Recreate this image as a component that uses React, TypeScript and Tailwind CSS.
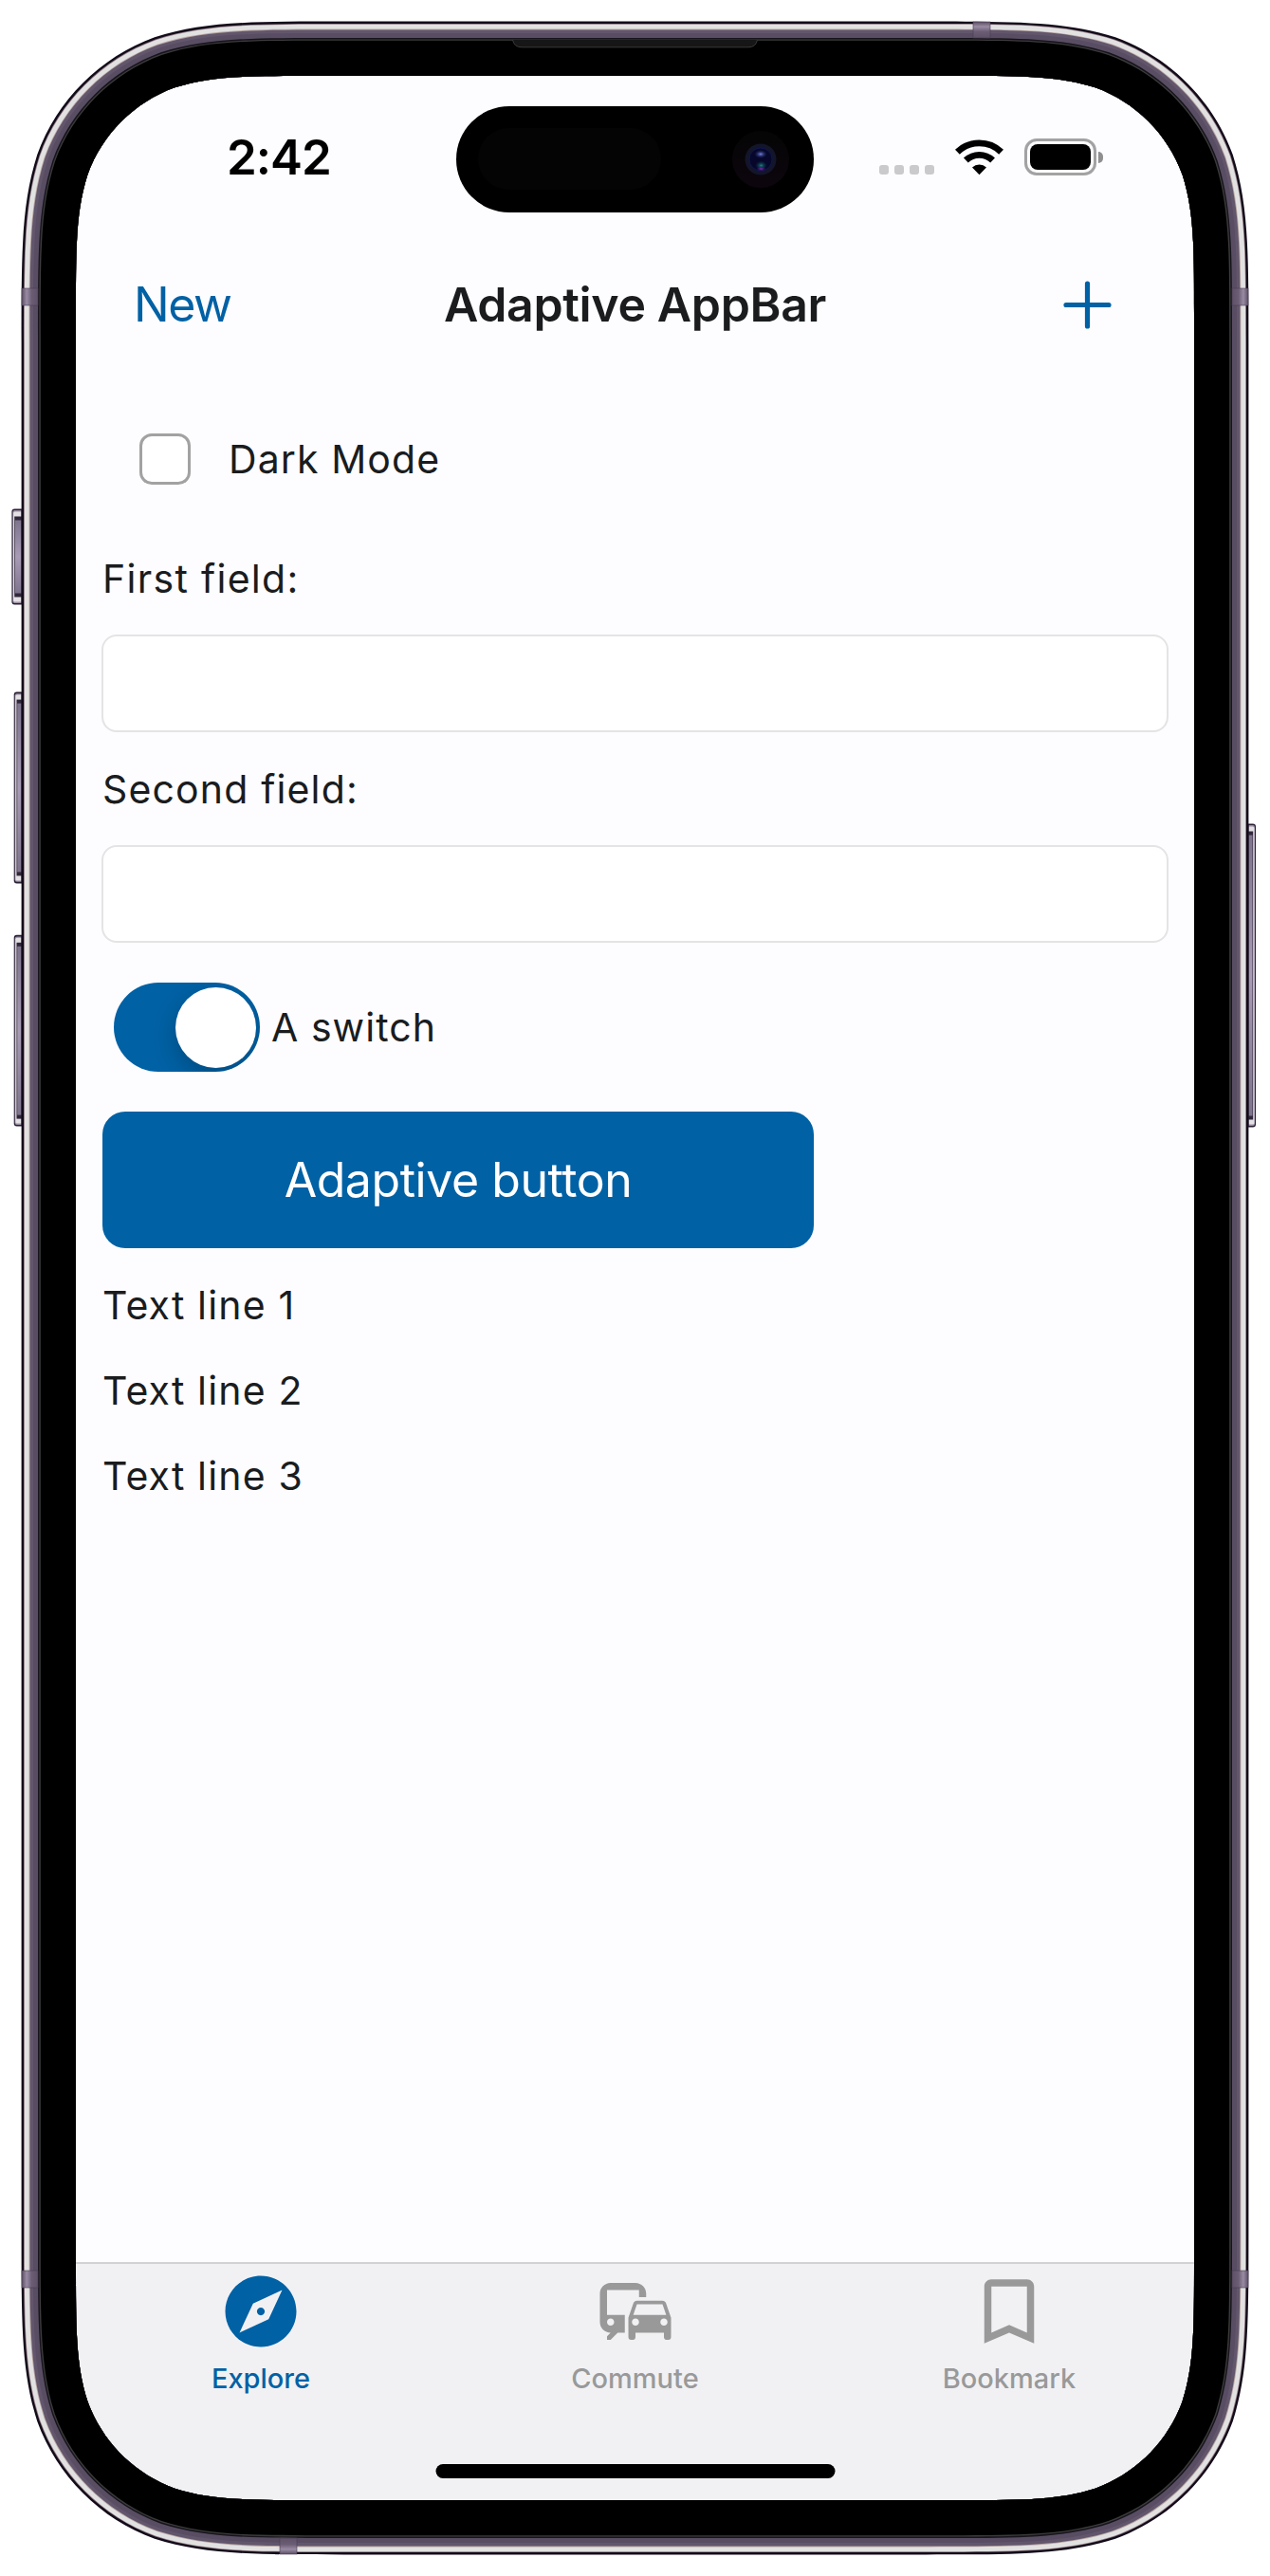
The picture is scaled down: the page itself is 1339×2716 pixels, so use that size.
import React, { useState } from "react";
import { MdBookmarkBorder, MdCommute, MdExplore } from "react-icons/md";

/** Path of a rectangle with continuous (squircle) corners. */
function squircle(x: number, y: number, w: number, h: number, r: number) {
  const a = 1.528665 * r;
  const b = 1.08849296 * r;
  const c = 0.86840694 * r;
  const d = 0.63149379 * r;
  const e = 0.07491139 * r;
  const f = 0.37282383 * r;
  const g = 0.16905956 * r;
  const R = x + w;
  const B = y + h;
  return [
    `M${x + a} ${y}H${R - a}`,
    `C${R - b} ${y} ${R - c} ${y} ${R - d} ${y + e}`,
    `C${R - f} ${y + g} ${R - g} ${y + f} ${R - e} ${y + d}`,
    `C${R} ${y + c} ${R} ${y + b} ${R} ${y + a}`,
    `V${B - a}`,
    `C${R} ${B - b} ${R} ${B - c} ${R - e} ${B - d}`,
    `C${R - g} ${B - f} ${R - f} ${B - g} ${R - d} ${B - e}`,
    `C${R - c} ${B} ${R - b} ${B} ${R - a} ${B}`,
    `H${x + a}`,
    `C${x + b} ${B} ${x + c} ${B} ${x + d} ${B - e}`,
    `C${x + f} ${B - g} ${x + g} ${B - f} ${x + e} ${B - d}`,
    `C${x} ${B - c} ${x} ${B - b} ${x} ${B - a}`,
    `V${y + a}`,
    `C${x} ${y + b} ${x} ${y + c} ${x + e} ${y + d}`,
    `C${x + g} ${y + f} ${x + f} ${y + g} ${x + d} ${y + e}`,
    `C${x + c} ${y} ${x + b} ${y} ${x + a} ${y}Z`,
  ].join("");
}

const SCREEN = { x: 80, y: 80, w: 1179, h: 2556, r: 165 };

function around(offset: number) {
  return squircle(
    SCREEN.x - offset,
    SCREEN.y - offset,
    SCREEN.w + offset * 2,
    SCREEN.h + offset * 2,
    SCREEN.r + offset,
  );
}

// Frame rings from the outside in: distance to the screen edge and colour.
const RINGS: [number, string][] = [
  [57.4, "#120b19"],
  [55, "#8d7880"],
  [54.2, "#e2e1e1"],
  [49.4, "#b8a7a3"],
  [48.5, "#62566c"],
  [45, "#584d62"],
  [40, "#17141c"],
  [38.6, "#3b3b3b"],
  [37.2, "#000000"],
];

function SideButton({ x, y, w, h, flip }: { x: number; y: number; w: number; h: number; flip?: boolean }) {
  return (
    <g transform={flip ? `translate(${x + w} ${y}) scale(-1 1)` : `translate(${x} ${y})`}>
      <rect width={w + 4} height={h} rx="3" fill="#2a2135" />
      <rect x="1" y="1.6" width={w + 2} height={h - 3.2} rx="2" fill="#9a8ca2" />
      <rect x="1.6" y="3" width={w} height={h - 6} rx="1.5" fill="#e4e1e5" />
      <rect x="2.8" y="8" width={w} height={h - 16} fill="#30273b" />
      <rect x="3.5" y="12" width={w} height={h - 24} fill="url(#side)" />
      <rect x={w - 1} y="1" width="3" height={h - 2} fill="#2a2135" opacity="0.6" />
    </g>
  );
}

function Bezel() {
  const hole = around(0);
  return (
    <svg
      className="pointer-events-none absolute inset-0"
      width="1339"
      height="2716"
      viewBox="0 0 1339 2716"
      aria-hidden="true"
    >
      <defs>
        <linearGradient id="side" x1="0" y1="0" x2="0" y2="1">
          <stop offset="0" stopColor="#7f748d" />
          <stop offset="0.5" stopColor="#a79bb5" />
          <stop offset="1" stopColor="#7f748d" />
        </linearGradient>
        <linearGradient id="band" x1="0" y1="0" x2="1" y2="0">
          <stop offset="0" stopColor="#5a4d63" />
          <stop offset="0.3" stopColor="#9a8ca4" />
          <stop offset="0.6" stopColor="#6b5d73" />
          <stop offset="1" stopColor="#5f5268" />
        </linearGradient>
      </defs>
      <path d={`M0 0H1339V2716H0Z${hole}`} fillRule="evenodd" fill="#ffffff" />
      <SideButton x={12.4} y={536.5} w={10.6} h={101} />
      <SideButton x={14.7} y={729.6} w={8.3} h={201.8} />
      <SideButton x={14.7} y={985.8} w={8.3} h={201.8} />
      <SideButton x={1316} y={868.5} w={8} h={320} flip />
      {RINGS.map(([offset, colour]) => (
        <path key={offset} d={around(offset) + hole} fillRule="evenodd" fill={colour} />
      ))}
      <g stroke="#4a3f54" strokeWidth="0.6">
        <rect x="23" y="304" width="17" height="18" fill="url(#band)" />
        <rect x="23" y="2394" width="17" height="18" fill="url(#band)" />
        <rect x="23" y="304" width="17" height="18" fill="url(#band)" transform="matrix(-1 0 0 1 1339 0)" />
        <rect x="23" y="2394" width="17" height="18" fill="url(#band)" transform="matrix(-1 0 0 1 1339 0)" />
        <rect x="0" y="0" width="17" height="18" fill="url(#band)" transform="matrix(0 1 1 0 1026 23)" />
        <rect x="0" y="0" width="17" height="18" fill="url(#band)" transform="matrix(0 -1 1 0 295 2693)" />
      </g>
      <path d="M540.500 42H798.500Q797 49.800 789 49.800H550Q542 49.800 540.500 42Z" fill="#161616" />
      <path
        d="M540.500 42Q542 49.800 550 49.800H789Q797 49.800 798.500 42"
        fill="none"
        stroke="#3a3a3a"
        strokeWidth="1"
      />
    </svg>
  );
}

function DynamicIsland() {
  return (
    <div className="mt-[31.500px] flex h-[112px] w-[376.5px] shrink-0 items-center justify-between rounded-full bg-black pr-[26px] pl-[23px]">
      <div className="h-[65px] w-[193px] rounded-full bg-[#040404]" />
      <div className="flex size-[60px] items-center justify-center rounded-full bg-gradient-to-b from-[#050505] to-[#0d050e]">
        <svg width="34" height="34" viewBox="0 0 34 34" aria-hidden="true">
          <defs>
            <radialGradient id="lensTop">
              <stop offset="0" stopColor="#7482dc" />
              <stop offset="1" stopColor="#1a1f5c" stopOpacity="0" />
            </radialGradient>
            <radialGradient id="lensGreen">
              <stop offset="0" stopColor="#1c8078" />
              <stop offset="1" stopColor="#0a2a50" stopOpacity="0" />
            </radialGradient>
            <radialGradient id="lensPurple">
              <stop offset="0" stopColor="#8a2bb8" />
              <stop offset="1" stopColor="#2a0c60" stopOpacity="0" />
            </radialGradient>
          </defs>
          <circle cx="17" cy="17" r="16.500" fill="#13152a" />
          <circle cx="17" cy="17" r="12" fill="#06072a" stroke="#10164f" strokeWidth="1" />
          <ellipse cx="17" cy="11.500" rx="7" ry="4.500" fill="url(#lensTop)" />
          <ellipse cx="17.500" cy="23.500" rx="6.500" ry="5" fill="url(#lensGreen)" />
          <ellipse cx="17.500" cy="27" rx="5.500" ry="2.800" fill="url(#lensPurple)" />
        </svg>
      </div>
    </div>
  );
}

function StatusIcons() {
  return (
    <div className="mt-[66px] flex h-[39px]">
      <div className="ml-[69px] flex items-end gap-1.5 pb-px">
        {[0, 1, 2, 3].map((i) => (
          <div key={i} className="size-[10px] rounded-[3px] bg-[#cacacc]" />
        ))}
      </div>
      <svg className="ml-[22px]" width="51" height="39" viewBox="0 0 51 39" aria-hidden="true">
        <g fill="none" stroke="#000" strokeWidth="6.900">
          <path d="M2.400 14.200A33.200 33.200 0 0 1 48.600 14.200" />
          <path d="M11.400 23A20.400 20.400 0 0 1 39.600 23" />
        </g>
        <path d="M25.500 38.200L18 30.600A10.700 10.700 0 0 1 33 30.600Z" fill="#000" />
      </svg>
      <div className="ml-[22px] flex items-center">
        <div className="flex h-[39px] w-[76px] rounded-[13px] border-3 border-[#a2a2a3] p-[3px]">
          <div className="w-full rounded-[8px] bg-black" />
        </div>
        <div className="ml-[2.500px] h-3 w-[5px] rounded-r-full bg-[#8f8f90]" />
      </div>
    </div>
  );
}

function StatusBar() {
  return (
    <div className="flex h-[175px] shrink-0">
      <div className="w-[401px] shrink-0 pt-[55px] pl-[159px] text-[51px] leading-[61px] font-semibold tracking-[-1px] text-black">
        2:42
      </div>
      <DynamicIsland />
      <StatusIcons />
    </div>
  );
}

function AppBar() {
  return (
    <header className="grid h-[132px] shrink-0 grid-cols-[1fr_auto_1fr] items-center pr-[87px] pl-[61px]">
      <button className="justify-self-start text-[50px] leading-[60px] tracking-[-1.5px] text-[#0061a4]">New</button>
      <h1 className="ml-[26px] text-[50px] leading-[60px] font-semibold tracking-[-0.36px] text-[#1a1c1e]">
        Adaptive AppBar
      </h1>
      <button className="justify-self-end text-[#0061a4]" aria-label="Add">
        <svg width="51" height="51" viewBox="0 0 51 51" aria-hidden="true">
          <path d="M25.500 3V48M3 25.500H48" stroke="currentColor" strokeWidth="5.200" strokeLinecap="round" />
        </svg>
      </button>
    </header>
  );
}

function TextField({ id, label, tracking }: { id: string; label: string; tracking: string }) {
  return (
    <>
      <label htmlFor={id} className={`h-[59px] leading-[60px] ${tracking}`}>
        {label}
      </label>
      <input
        id={id}
        className="-ml-px h-[103px] rounded-[16px] border-2 border-[#e4e4e5] bg-white px-5 outline-none"
      />
    </>
  );
}

function Content() {
  return (
    <main className="flex flex-1 flex-col gap-[30px] pt-[30px] pr-[27px] pl-7 text-[41px] tracking-[1.15px] text-[#1a1c1e]">
      <div className="flex h-[133px] items-center pl-[39px]">
        <div className="size-[54px] rounded-[13px] border-3 border-[#a2a2a2] bg-white" />
        <span className="ml-[40px] leading-[60px] tracking-[1.1px]">Dark Mode</span>
      </div>
      <TextField id="first" label="First field:" tracking="tracking-[1.3px]" />
      <TextField id="second" label="Second field:" tracking="tracking-[1.15px]" />
      <div className="flex h-[118px] items-center pl-3">
        <div className="flex h-[94px] w-[154px] items-center justify-end overflow-hidden rounded-full bg-[#0061a4] pr-1">
          <div className="size-[85px] rounded-full bg-white shadow-[0_9px_24px_rgba(0,0,0,0.22)]" />
        </div>
        <span className="ml-3 leading-[60px] tracking-[1.05px]">A switch</span>
      </div>
      <button className="h-[144px] w-[750px] rounded-[24px] bg-[#0061a4] text-[50px] leading-[60px] tracking-[-0.44px] text-white">
        Adaptive button
      </button>
      <p className="leading-[60px]">Text line 1</p>
      <p className="leading-[60px]">Text line 2</p>
      <p className="leading-[60px]">Text line 3</p>
    </main>
  );
}

const TABS = [
  { label: "Explore", Icon: MdExplore },
  { label: "Commute", Icon: MdCommute },
  { label: "Bookmark", Icon: MdBookmarkBorder },
];

function TabBar() {
  const [selected, setSelected] = useState("Explore");
  return (
    <nav className="relative flex h-[251px] shrink-0 justify-center border-t-2 border-[#d2d2d4] bg-[#f1f1f4]">
      {TABS.map(({ label, Icon }) => (
        <button
          key={label}
          onClick={() => setSelected(label)}
          className={`flex w-[394.5px] shrink-0 flex-col items-center pt-[4.500px] text-[29px] leading-[35px] font-medium ${
            selected === label ? "text-[#0061a4]" : "text-[#999999]"
          }`}
        >
          <Icon size={90} />
          <span className="mt-2">{label}</span>
        </button>
      ))}
      <div className="absolute bottom-[23px] left-1/2 h-[15px] w-[421px] -translate-x-1/2 rounded-full bg-black" />
    </nav>
  );
}

export default function App() {
  return (
    <div className="relative h-[2716px] w-[1339px] overflow-hidden bg-white p-20 font-['Inter',sans-serif]">
      <div className="flex h-[2556px] w-[1179px] flex-col overflow-hidden bg-[#fdfcff]">
        <StatusBar />
        <AppBar />
        <Content />
        <TabBar />
      </div>
      <Bezel />
    </div>
  );
}
